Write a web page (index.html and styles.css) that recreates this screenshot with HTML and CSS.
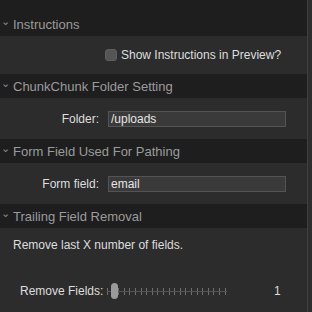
FILE: index.html
```html
<!DOCTYPE html>
<html lang="en">
<head>
  <meta charset="UTF-8" />
  <title>Settings</title>
  <link rel="stylesheet" href="styles.css">
</head>
<body>
  <div class="inspector">
    <div class="pane">

      <!-- Instructions -->
      <div class="section-head first"><span class="chev">&#8964;</span>Instructions</div>
      <div class="section-body check-row">
        <span class="checkbox"></span>
        <span class="check-label">Show Instructions in Preview?</span>
      </div>

      <!-- Folder -->
      <div class="section-head"><span class="chev">&#8964;</span>ChunkChunk Folder Setting</div>
      <div class="section-body field-row">
        <label class="field-label" for="folder">Folder:</label>
        <input class="field-input" id="folder" type="text" value="/uploads" />
      </div>

      <!-- Pathing -->
      <div class="section-head"><span class="chev">&#8964;</span>Form Field Used For Pathing</div>
      <div class="section-body field-row">
        <label class="field-label" for="formField">Form field:</label>
        <input class="field-input" id="formField" type="text" value="email" />
      </div>

      <!-- Trailing -->
      <div class="section-head"><span class="chev">&#8964;</span>Trailing Field Removal</div>
      <div class="section-body trailing">
        <p class="desc">Remove last X number of fields.</p>
        <div class="slider-row">
          <span class="slider-label">Remove Fields:</span>
          <div class="slider">
            <span class="thumb"></span>
          </div>
          <span class="slider-value">1</span>
        </div>
      </div>

    </div>
    <div class="gutter"></div>
  </div>
</body>
</html>
```

FILE: styles.css
```css
* {
  box-sizing: border-box;
  margin: 0;
  padding: 0;
}

body {
  font-family: 'Liberation Sans', Arial, sans-serif;
  background: #2c2c2c;
  width: 312px;
  height: 312px;
  overflow: hidden;
}

.inspector {
  display: flex;
  height: 312px;
}

.pane {
  flex: 1;
  background: #2c2c2c;
}

.gutter {
  width: 5px;
  background: #2e2e2e;
  border-left: 1px solid #3f3f3f;
}

.section-head {
  height: 24px;
  background: #1e1e1e;
  color: #9b9b9b;
  font-size: 13px;
  display: flex;
  align-items: center;
  padding-left: 1px;
}

.section-head.first {
  height: 36px;
  padding-top: 12px;
}

.chev {
  width: 12px;
  font-size: 11px;
  color: #8a8a8a;
  line-height: 1;
  margin-top: -5px;
}

.section-body {
  color: #dedede;
  font-size: 12px;
}

.check-row {
  height: 38px;
  display: flex;
  align-items: center;
  padding-left: 105px;
  gap: 4px;
}

.checkbox {
  width: 12px;
  height: 12px;
  border-radius: 3px;
  background: #555;
  border: 1px solid #5e5e5e;
}

.field-row {
  height: 41px;
  display: flex;
  align-items: center;
}

.field-label {
  width: 100px;
  text-align: right;
  padding-right: 1px;
}

.field-input {
  margin-left: 8px;
  width: 178px;
  height: 16px;
  background: #3a3a3a;
  border: 1px solid #545454;
  color: #e6e6e6;
  font-family: inherit;
  font-size: 12px;
  padding: 0 2px;
  outline: none;
}

.trailing {
  padding-top: 10px;
}

.desc {
  padding-left: 13px;
  height: 20px;
  line-height: 14px;
}

.slider-row {
  margin-top: 25px;
  display: flex;
  align-items: center;
}

.slider-label {
  flex-shrink: 0;
  width: 99px;
  padding-left: 20px;
  white-space: nowrap;
}

.slider {
  position: relative;
  flex-shrink: 0;
  margin-left: 8px;
  width: 120px;
  height: 16px;
  background:
    linear-gradient(#555, #555) left center / 100% 1px no-repeat,
    repeating-linear-gradient(90deg, #6e6e6e 0 1px, transparent 1px 5.6px) left center / 100% 7px no-repeat;
}

.thumb {
  position: absolute;
  left: 4px;
  top: 0;
  width: 7px;
  height: 16px;
  border-radius: 4px;
  background: #9a9a9a;
}

.slider-value {
  margin-left: 47px;
}
```
